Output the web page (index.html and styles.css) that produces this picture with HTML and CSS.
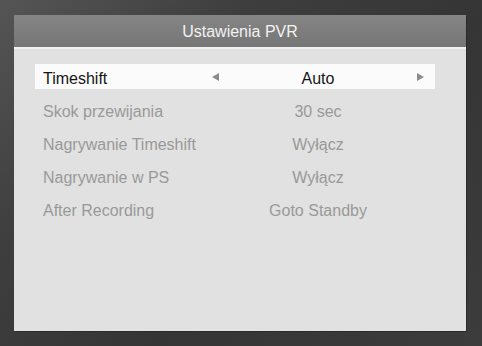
FILE: index.html
```html
<!DOCTYPE html>
<html>
<head>
<meta charset="utf-8">
<link rel="stylesheet" href="styles.css">
</head>
<body>
<div class="dialog">
  <div class="header">Ustawienia PVR</div>
  <div class="content">
    <div class="row selected">
      <span class="label">Timeshift</span>
      <span class="arrow left"></span>
      <span class="value">Auto</span>
      <span class="arrow right"></span>
    </div>
    <div class="row">
      <span class="label">Skok przewijania</span>
      <span></span>
      <span class="value">30 sec</span>
      <span></span>
    </div>
    <div class="row">
      <span class="label">Nagrywanie Timeshift</span>
      <span></span>
      <span class="value">Wyłącz</span>
      <span></span>
    </div>
    <div class="row">
      <span class="label">Nagrywanie w PS</span>
      <span></span>
      <span class="value">Wyłącz</span>
      <span></span>
    </div>
    <div class="row">
      <span class="label">After Recording</span>
      <span></span>
      <span class="value">Goto Standby</span>
      <span></span>
    </div>
  </div>
</div>
</body>
</html>
```
FILE: styles.css
```css
html, body {
  margin: 0;
  padding: 0;
}
body {
  width: 482px;
  height: 346px;
  overflow: hidden;
  background: linear-gradient(135deg, #555 0%, #3e3e3e 30%, #353535 60%, #3c3c3c 100%);
  font-family: "Liberation Sans", Arial, sans-serif;
  padding: 15px 16px 15px 14px;
  box-sizing: border-box;
}
.dialog {
  width: 452px;
  height: 316px;
  display: flex;
  flex-direction: column;
  background: #e1e1e1;
  box-shadow: 1px 1px 0 #2a2a2a;
}
.header {
  height: 34px;
  line-height: 33px;
  text-align: center;
  color: #f2f2f2;
  font-size: 16px;
  background: linear-gradient(#858585, #767676);
  border-bottom: 2px solid #f0f0f0;
  box-sizing: border-box;
}
.content {
  padding: 15px 0 0 21px;
  display: flex;
  flex-direction: column;
  gap: 8px;
}
.row {
  width: 400px;
  height: 25px;
  box-sizing: border-box;
  padding: 5px 11px 0 8px;
  line-height: 20px;
  font-size: 16px;
  color: #999999;
  display: grid;
  grid-template-columns: 169px 7px 198px 7px;
  align-items: start;
}
.row.selected {
  background: #fbfbfb;
  color: #151515;
}
.label {
  white-space: nowrap;
}
.value {
  text-align: center;
  white-space: nowrap;
}
.arrow {
  width: 0;
  height: 0;
  margin-top: 4px;
  border-top: 4px solid transparent;
  border-bottom: 4px solid transparent;
}
.arrow.left {
  border-right: 7px solid #8a8a8a;
}
.arrow.right {
  border-left: 7px solid #8a8a8a;
}
```
